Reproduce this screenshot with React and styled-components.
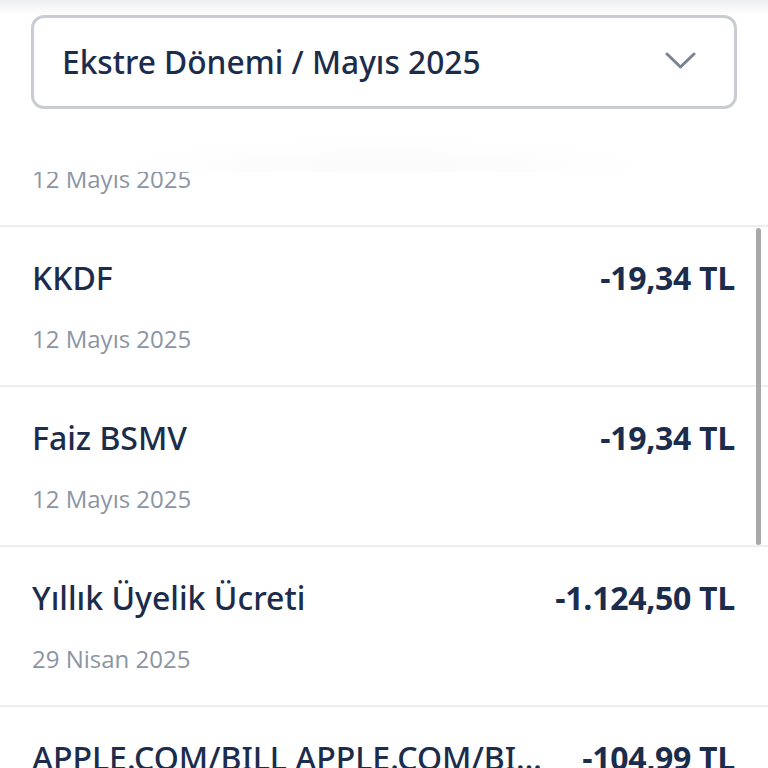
import React from 'react';
import styled, { createGlobalStyle } from 'styled-components';

const GlobalStyle = createGlobalStyle`
  html, body {
    margin: 0;
    padding: 0;
    background: #ffffff;
  }
  body {
    font-family: 'Open Sans', 'Noto Sans', sans-serif;
    -webkit-font-smoothing: antialiased;
  }
`;

// Ekranın tamamı
const Screen = styled.div`
  position: relative;
  width: 768px;
  height: 768px;
  overflow: hidden;
  background: #ffffff;
`;

// Üstteki dönem seçici alanı
const Header = styled.header`
  position: relative;
  z-index: 2;
  height: 172px;
  box-sizing: border-box;
  padding: 15px 31px 0;
  background: linear-gradient(to bottom, #eeeff0 0px, #ffffff 16px);

  &::after {
    content: '';
    position: absolute;
    left: 110px;
    right: 110px;
    bottom: 0;
    height: 34px;
    background: radial-gradient(ellipse at 50% 80%, rgba(30, 40, 60, 0.025), rgba(30, 40, 60, 0) 70%);
  }
`;

const Select = styled.div`
  height: 94px;
  box-sizing: border-box;
  border: 3px solid #c9cdd3;
  border-radius: 13px;
  background: #ffffff;
  display: flex;
  align-items: center;
  justify-content: space-between;
  padding: 0 38px 2px 28px;
`;

const SelectLabel = styled.span`
  font-family: 'Noto Sans', 'Open Sans', sans-serif;
  font-size: 31.7px;
  font-weight: 500;
  color: #1c2c4c;
`;

const Chevron = styled.svg`
  width: 31px;
  height: 18px;
`;

// Hareket listesi
const List = styled.div`
  position: relative;
`;

const Row = styled.div`
  box-sizing: border-box;
  height: ${p => (p.$clip ? '55px' : '160px')};
  overflow: hidden;
  border-bottom: 2px solid #eceef0;
  padding: 0 33px 0 32px;
  display: flex;
  flex-direction: column;
  justify-content: ${p => (p.$clip ? 'flex-end' : 'flex-start')};
`;

const RowInner = styled.div`
  padding: 31px 0 31px;
  display: flex;
  flex-direction: column;
  gap: 28px;
`;

const TopLine = styled.div`
  display: flex;
  align-items: center;
  justify-content: space-between;
  gap: 34px;
  height: 38px;
`;

const Title = styled.span`
  flex: 1;
  min-width: 0;
  font-family: 'Noto Sans', 'Open Sans', sans-serif;
  font-size: 32px;
  font-weight: 500;
  color: #1c2c4c;
  white-space: nowrap;
  overflow: hidden;
  text-overflow: ellipsis;
`;

const Amount = styled.span`
  flex-shrink: 0;
  font-size: 32px;
  font-weight: 700;
  color: #1c2c4c;
  letter-spacing: -0.3px;
`;

const DateText = styled.span`
  display: block;
  height: 30px;
  line-height: 30px;
  font-size: 24px;
  color: #8c95a4;
`;

const ScrollThumb = styled.div`
  position: absolute;
  right: 7px;
  top: 1px;
  width: 5px;
  height: 317px;
  border-radius: 3px;
  background: #a9a9a9;
`;

const items = [
  { title: 'KKDF', amount: '-19,34 TL', date: '12 Mayıs 2025' },
  { title: 'Faiz BSMV', amount: '-19,34 TL', date: '12 Mayıs 2025' },
  { title: 'Yıllık Üyelik Ücreti', amount: '-1.124,50 TL', date: '29 Nisan 2025' },
  { title: 'APPLE.COM/BILL APPLE.COM/BILL ISTANBUL', amount: '-104,99 TL', date: '28 Nisan 2025' },
];

const Transaction = ({ item }) => (
  <RowInner>
    <TopLine>
      <Title>{item.title}</Title>
      <Amount>{item.amount}</Amount>
    </TopLine>
    <DateText>{item.date}</DateText>
  </RowInner>
);

const App = () => {
  return (
    <Screen>
      <GlobalStyle />
      <Header>
        <Select>
          <SelectLabel>Ekstre Dönemi / Mayıs 2025</SelectLabel>
          <Chevron viewBox="0 0 31 18" fill="none">
            <polyline points="2,2 15.5,15 29,2" stroke="#7b8390" strokeWidth="3" strokeLinecap="round" strokeLinejoin="round" />
          </Chevron>
        </Select>
      </Header>

      <Row $clip>
        <Transaction item={{ title: 'Faiz', amount: '-96,70 TL', date: '12 Mayıs 2025' }} />
      </Row>
      <List>
        {items.map(item => (
          <Row key={item.title}>
            <Transaction item={item} />
          </Row>
        ))}
        <ScrollThumb />
      </List>
    </Screen>
  );
};

export default App;
